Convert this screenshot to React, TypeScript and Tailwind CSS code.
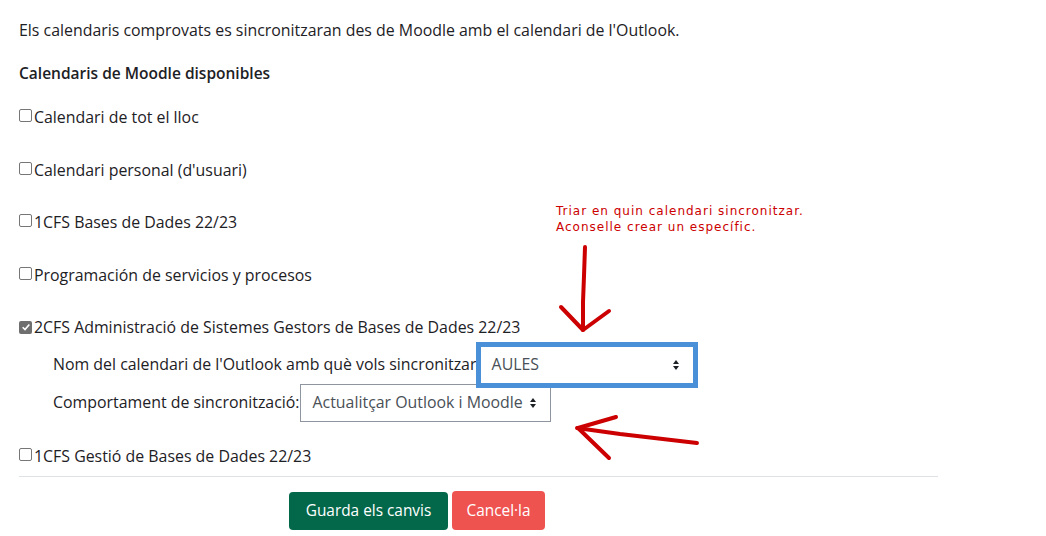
import React from 'react';

const Check = ({ checked = false }: { checked?: boolean }) =>
  checked ? (
    <span className="inline-flex w-[13px] h-[13px] shrink-0 items-center justify-center rounded-[2px] bg-[#6f6f6f]">
      <svg viewBox="0 0 12 12" className="w-[10px] h-[10px]">
        <path d="M2 6.3 L4.8 9 L10 3" fill="none" stroke="#fff" strokeWidth="2" />
      </svg>
    </span>
  ) : (
    <span className="inline-block w-[13px] h-[13px] shrink-0 rounded-[2px] border border-[#767676] bg-white" />
  );

const Row = ({ label, checked = false }: { label: string; checked?: boolean }) => (
  <div className="flex items-center gap-[2px] h-[22px] leading-[22px]">
    <span className="-mt-[2px]">
      <Check checked={checked} />
    </span>
    <span>{label}</span>
  </div>
);

const Arrows = () => (
  <svg width="10" height="10" viewBox="0 0 6 10" className="shrink-0">
    <path d="M3 0 L6 4 L0 4 Z M3 10 L6 6 L0 6 Z" fill="#1d2125" />
  </svg>
);

export default function App() {
  return (
    <div
      className="relative w-full h-[536px] overflow-hidden bg-white pl-[19px] text-[15.9px] text-[#1d2125]"
      style={{ fontFamily: '"Open Sans", "Liberation Sans", sans-serif' }}
    >
      <p className="pt-[19px] leading-[22px]">
        Els calendaris comprovats es sincronitzaran des de Moodle amb el calendari de l'Outlook.
      </p>
      <h4 className="mt-[21px] text-[15.5px] font-semibold leading-[22px]">Calendaris de Moodle disponibles</h4>

      <div className="mt-[22px] flex flex-col gap-[30.5px]">
        <Row label="Calendari de tot el lloc" />
        <Row label="Calendari personal (d'usuari)" />
        <Row label="1CFS Bases de Dades 22/23" />
        <Row label="Programación de servicios y procesos" />
        <Row label="2CFS Administració de Sistemes Gestors de Bases de Dades 22/23" checked />
      </div>

      <div className="mt-[8px] pl-[34px] flex flex-col">
        <div className="flex items-center h-[38px]">
          <span>Nom del calendari de l'Outlook amb què vols sincronitzar:</span>
          <div className="relative z-10 -ml-[1px] flex h-[38px] w-[214px] items-center justify-between border border-[#4a90d9] bg-white pl-[11px] pr-[12px] text-[#495057] shadow-[0_0_0_4px_#4a90d9]">
            <span>AULES</span>
            <Arrows />
          </div>
        </div>
        <div className="flex items-center h-[38px]">
          <span>Comportament de sincronització:</span>
          <div className="flex h-[38px] w-[251px] items-center justify-between border border-[#8f959e] bg-white pl-[12px] pr-[12px] text-[#495057]">
            <span>Actualitçar Outlook i Moodle</span>
            <Arrows />
          </div>
        </div>
      </div>

      <div className="mt-[23px]">
        <Row label="1CFS Gestió de Bases de Dades 22/23" />
      </div>

      <hr className="mt-[9px] w-[919px] border-t border-[#dee2e6]" />

      <div className="mt-[15px] pl-[270px] flex gap-[4px] text-[15.4px]">
        <button className="h-[38px] w-[159px] rounded-[4px] bg-[#03684a] text-white">Guarda els canvis</button>
        <button className="h-[39px] -mt-[1px] w-[93px] rounded-[4px] bg-[#ef5350] text-white">Cancel·la</button>
      </div>

      {/* annotation */}
      <div
        className="absolute left-[556px] top-[203px] text-[12px] leading-[16px] tracking-[1px] text-[#cc0000]"
        style={{ fontFamily: '"DejaVu Sans", sans-serif' }}
      >
        <div>Triar en quin calendari sincronitzar.</div>
        <div>Aconselle crear un específic.</div>
      </div>
      <svg className="absolute left-0 top-0 pointer-events-none" width="1046" height="536">
        <g fill="none" stroke="#cc0000" strokeWidth="4" strokeLinecap="round" strokeLinejoin="round">
          <path d="M585 247 L584 276 L583 302 L583 330" />
          <path d="M561 307 L583 330 L609 311" />
          <path d="M697 443 L620 434 L577 428" />
          <path d="M616 417 L578 428 L609 458" />
        </g>
      </svg>
    </div>
  );
}
